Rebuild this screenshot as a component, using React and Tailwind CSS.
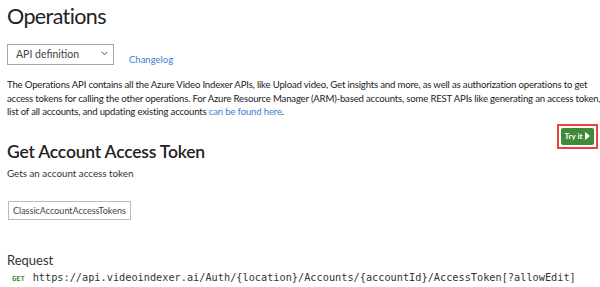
import React from "react";

export default function App() {
  return (
    <div className="w-[600px] h-[287px] overflow-hidden bg-white text-[#333] font-['Lato',sans-serif]">
      <div className="px-[7px]">
        <h1 className="text-[21.5px] leading-[32px] text-[#222] tracking-[-0.6px]">Operations</h1>
        <div className="mt-[12px] flex items-end">
          <div className="w-[107px] h-[21px] border border-[#a6a6a6] flex items-center justify-between pl-[8px] pr-[5px] text-[10.5px] text-[#444]">
            <span>API definition</span>
            <svg width="7" height="5" viewBox="0 0 7 5" className="mb-[2px]">
              <path d="M0.5 0.8 L3.5 3.8 L6.5 0.8" fill="none" stroke="#555" strokeWidth="1" />
            </svg>
          </div>
          <a className="ml-[15px] mb-[-2px] text-[9.5px] text-[#3a7fd5]">Changelog</a>
        </div>
        <p className="mt-[13px] text-[9.6px] leading-[13.5px] text-[#222] tracking-[-0.18px]">
          <span className="block whitespace-nowrap">The Operations API contains all the Azure Video Indexer APIs, like Upload video, Get insights and more, as well as authorization operations to get</span>
          <span className="block whitespace-nowrap">access tokens for calling the other operations. For Azure Resource Manager (ARM)-based accounts, some REST APIs like generating an access token,</span>
          <span className="block whitespace-nowrap">list of all accounts, and updating existing accounts <span className="text-[#3a7fd5]">can be found here</span>.</span>
        </p>
        <div className="float-right mt-[5px] mr-[-5px] border-2 border-[#e8433f] p-[2px]">
          <div className="w-[33px] h-[17px] rounded-[2px] bg-[#3f8a3a] flex items-center justify-center gap-[3px] text-white text-[8px] font-bold">
            <span>Try it</span>
            <svg width="5" height="8" viewBox="0 0 5 8"><path d="M0 0 L5 4 L0 8 Z" fill="white" /></svg>
          </div>
        </div>
        <h2 className="pt-[21px] text-[17.5px] leading-[24px] font-semibold text-[#222] tracking-[-0.2px]">Get Account Access Token</h2>
        <p className="mt-[3px] text-[9.8px] leading-[13px] text-[#333]">Gets an account access token</p>
        <div className="mt-[21px] ml-[1px] inline-block border border-[#bbb] px-[4px] h-[19px] leading-[17px] text-[9px] text-[#444]">ClassicAccountAccessTokens</div>
        <div className="mt-[31px] text-[13px] leading-[18px] text-[#333]">Request</div>
        <div className="mt-[1px] flex items-baseline gap-[8px] pl-[5px]">
          <span className="text-[7px] font-bold text-[#3f8a3a] font-['DejaVu_Sans_Mono',monospace]">GET</span>
          <span className="text-[10.25px] leading-[14px] text-[#333] font-['DejaVu_Sans_Mono',monospace]">https://api.videoindexer.ai/Auth/{"{location}"}/Accounts/{"{accountId}"}/AccessToken[?allowEdit]</span>
        </div>
      </div>
    </div>
  );
}
